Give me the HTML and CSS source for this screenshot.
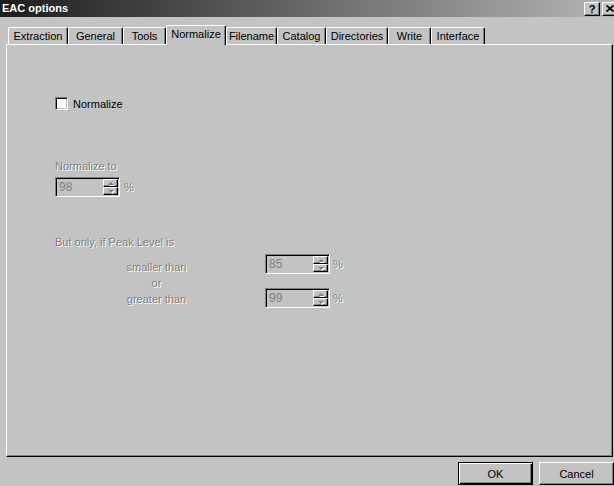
FILE: index.html
```html
<!DOCTYPE html>
<html lang="en">
<head>
    <meta charset="UTF-8">
    <title>EAC options</title>
    <link rel="stylesheet" href="styles.css">
</head>
<body>

<div class="window">
    <div class="titlebar">
        <span class="title">EAC options</span>
        <div class="caption-buttons">
            <span class="cap-btn">?</span>
            <span class="cap-btn">
                <svg width="8" height="7" viewBox="0 0 8 7">
                    <path d="M0.5 0.5 L7.5 6.5 M7.5 0.5 L0.5 6.5" stroke="#000" stroke-width="1.6"/>
                </svg>
            </span>
        </div>
    </div>

    <div class="tabs">
        <div class="tab">Extraction</div>
        <div class="tab">General</div>
        <div class="tab">Tools</div>
        <div class="tab active">Normalize</div>
        <div class="tab">Filename</div>
        <div class="tab">Catalog</div>
        <div class="tab">Directories</div>
        <div class="tab">Write</div>
        <div class="tab">Interface</div>
    </div>

    <div class="panel">
        <div class="check-row">
            <span class="checkbox"></span>
            <label>Normalize</label>
        </div>

        <div class="label-line disabled normalize-to">Normalize to</div>
        <div class="spin-row first-spin">
            <div class="spinner">
                <span class="spin-value">98</span>
                <span class="spin-buttons">
                    <span class="spin-btn up"></span>
                    <span class="spin-btn down"></span>
                </span>
            </div>
            <span class="disabled">%</span>
        </div>

        <div class="label-line disabled peak-title">But only, if Peak Level is</div>
        <div class="peak">
            <div class="peak-labels disabled">
                <div>smaller than</div>
                <div>or</div>
                <div>greater than</div>
            </div>
            <div class="peak-fields">
                <div class="spin-row">
                    <div class="spinner">
                        <span class="spin-value">85</span>
                        <span class="spin-buttons">
                            <span class="spin-btn up"></span>
                            <span class="spin-btn down"></span>
                        </span>
                    </div>
                    <span class="disabled">%</span>
                </div>
                <div class="spin-row">
                    <div class="spinner">
                        <span class="spin-value">99</span>
                        <span class="spin-buttons">
                            <span class="spin-btn up"></span>
                            <span class="spin-btn down"></span>
                        </span>
                    </div>
                    <span class="disabled">%</span>
                </div>
            </div>
        </div>
    </div>

    <div class="footer">
        <button type="button" class="button default">OK</button>
        <button type="button" class="button">Cancel</button>
    </div>
</div>

</body>
</html>
```

FILE: styles.css
```css
body {
    margin: 0;
    background-color: #c3c3c3;
    font-family: "Liberation Sans", Arial, sans-serif;
    font-size: 11px;
    color: #000;
}
.window {
    width: 614px;
    height: 486px;
    overflow: hidden;
}

/* title bar */
.titlebar {
    height: 17px;
    display: flex;
    align-items: center;
    justify-content: space-between;
    background: linear-gradient(to right, #1c1c1c, #b5b5b5);
}
.title {
    padding-left: 2px;
    color: #fff;
    font-weight: bold;
    line-height: 17px;
}
.caption-buttons {
    display: flex;
    gap: 2px;
    margin-right: -4px;
}
.cap-btn {
    box-sizing: border-box;
    width: 16px;
    height: 14px;
    display: flex;
    align-items: center;
    justify-content: center;
    background-color: #c3c3c3;
    border: 1px solid;
    border-color: #fff #000 #000 #fff;
    box-shadow: inset -1px -1px 0 #808080;
    font-weight: bold;
    font-size: 11px;
    line-height: 12px;
}

/* tabs */
.tabs {
    position: relative;
    z-index: 1;
    display: flex;
    align-items: flex-end;
    height: 27px;
    padding-left: 8px;
}
.tab {
    box-sizing: border-box;
    height: 17px;
    border-top: 1px solid #fff;
    border-left: 1px solid #fff;
    border-right: 1px solid #000;
    border-radius: 2px 2px 0 0;
    box-shadow: inset -1px 0 0 #808080;
    background-color: #c3c3c3;
    text-align: center;
    line-height: 16px;
    white-space: nowrap;
}
.tab.active {
    height: 20px;
    margin-bottom: -1px;
}
.tab:nth-child(1) { width: 60px; }
.tab:nth-child(2) { width: 55px; }
.tab:nth-child(3) { width: 43px; }
.tab:nth-child(4) { width: 60px; }
.tab:nth-child(5) { width: 51px; }
.tab:nth-child(6) { width: 49px; }
.tab:nth-child(7) { width: 62px; }
.tab:nth-child(8) { width: 43px; }
.tab:nth-child(9) { width: 54px; }

/* page */
.panel {
    box-sizing: border-box;
    width: 607px;
    height: 413px;
    margin-left: 6px;
    padding: 52px 0 0 48px;
    border: 1px solid;
    border-color: #fff #000 #000 #fff;
    box-shadow: inset -1px -1px 0 #808080;
}
.disabled {
    color: #808080;
    text-shadow: 1px 1px 0 #fff;
}
.label-line {
    line-height: 13px;
}
.check-row {
    display: flex;
    align-items: center;
    height: 13px;
}
.check-row label {
    margin-left: 5px;
}
.checkbox {
    box-sizing: border-box;
    width: 13px;
    height: 13px;
    background-color: #fff;
    border: 1px solid;
    border-color: #808080 #fff #fff #808080;
    box-shadow: inset 1px 1px 0 #000, inset -1px -1px 0 #c3c3c3;
}
.normalize-to {
    margin-top: 50px;
}
.first-spin {
    margin-top: 4px;
}
.peak-title {
    margin-top: 39px;
}

/* spin boxes */
.spin-row {
    display: flex;
    align-items: center;
    gap: 4px;
}
.spinner {
    box-sizing: border-box;
    width: 65px;
    height: 20px;
    display: flex;
    padding: 1px;
    border: 1px solid;
    border-color: #808080 #fff #fff #808080;
    box-shadow: inset 1px 1px 0 #000, inset -1px -1px 0 #c3c3c3;
}
.spin-value {
    flex: 1;
    padding-left: 2px;
    color: #808080;
    font-size: 12px;
    line-height: 16px;
}
.spin-buttons {
    display: flex;
    flex-direction: column;
    width: 15px;
}
.spin-btn {
    box-sizing: border-box;
    flex: 1;
    display: flex;
    align-items: center;
    justify-content: center;
    border: 1px solid;
    border-color: #fff #000 #000 #fff;
    box-shadow: inset -1px -1px 0 #808080;
}
.spin-btn::after {
    content: "";
    width: 0;
    height: 0;
    border-left: 3px solid transparent;
    border-right: 3px solid transparent;
    filter: drop-shadow(1px 1px 0 #fff);
}
.spin-btn.up::after {
    border-bottom: 3px solid #808080;
}
.spin-btn.down::after {
    border-top: 3px solid #808080;
}

.peak {
    display: flex;
    margin-top: 5px;
}
.peak-labels {
    width: 203px;
    padding-top: 5px;
    line-height: 16px;
    text-align: center;
}
.peak-fields {
    display: flex;
    flex-direction: column;
    gap: 14px;
    margin-left: 7px;
}
.peak-fields .spin-row {
    gap: 3px;
}

/* buttons */
.footer {
    display: flex;
    justify-content: flex-end;
    gap: 6px;
    margin-top: 5px;
}
.button {
    box-sizing: border-box;
    width: 75px;
    height: 23px;
    padding: 0;
    font: inherit;
    color: #000;
    background-color: #c3c3c3;
    border: 1px solid;
    border-color: #fff #000 #000 #fff;
    box-shadow: inset -1px -1px 0 #808080;
}
.button.default {
    border-color: #000;
    box-shadow: inset 1px 1px 0 #fff, inset -1px -1px 0 #000, inset -2px -2px 0 #808080;
}
```
